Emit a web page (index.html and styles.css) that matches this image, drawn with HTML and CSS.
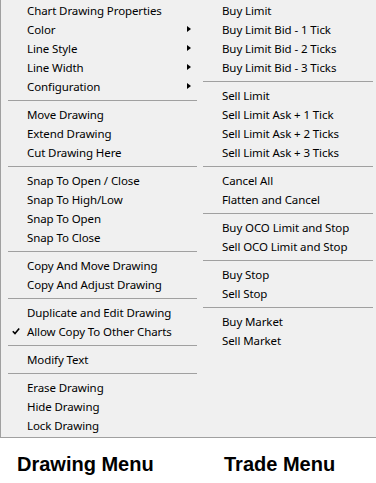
FILE: index.html
```html
<!DOCTYPE html>
<html lang="en">
<head>
    <meta charset="UTF-8">
    <title>Drawing and Trade Menus</title>
    <link rel="stylesheet" href="styles.css">
</head>
<body>

<div class="menus">
    <!-- Drawing Menu -->
    <ul class="menu menu-drawing">
        <li class="item">Chart Drawing Properties</li>
        <li class="item sub">Color</li>
        <li class="item sub">Line Style</li>
        <li class="item sub">Line Width</li>
        <li class="item sub">Configuration</li>
        <li class="sep"></li>
        <li class="item">Move Drawing</li>
        <li class="item">Extend Drawing</li>
        <li class="item">Cut Drawing Here</li>
        <li class="sep"></li>
        <li class="item">Snap To Open / Close</li>
        <li class="item">Snap To High/Low</li>
        <li class="item">Snap To Open</li>
        <li class="item">Snap To Close</li>
        <li class="sep"></li>
        <li class="item">Copy And Move Drawing</li>
        <li class="item">Copy And Adjust Drawing</li>
        <li class="sep"></li>
        <li class="item">Duplicate and Edit Drawing</li>
        <li class="item checked">
            <svg class="check" width="8" height="7" viewBox="0 0 8 7"><path d="M0.8 3.2 L3 5.6 L7.2 0.6" fill="none" stroke="#000" stroke-width="1.6"/></svg>
            Allow Copy To Other Charts
        </li>
        <li class="sep"></li>
        <li class="item">Modify Text</li>
        <li class="sep"></li>
        <li class="item">Erase Drawing</li>
        <li class="item">Hide Drawing</li>
        <li class="item">Lock Drawing</li>
    </ul>

    <!-- Trade Menu -->
    <ul class="menu menu-trade">
        <li class="item">Buy Limit</li>
        <li class="item">Buy Limit Bid - 1 Tick</li>
        <li class="item">Buy Limit Bid - 2 Ticks</li>
        <li class="item">Buy Limit Bid - 3 Ticks</li>
        <li class="sep"></li>
        <li class="item">Sell Limit</li>
        <li class="item">Sell Limit Ask + 1 Tick</li>
        <li class="item">Sell Limit Ask + 2 Ticks</li>
        <li class="item">Sell Limit Ask + 3 Ticks</li>
        <li class="sep"></li>
        <li class="item">Cancel All</li>
        <li class="item">Flatten and Cancel</li>
        <li class="sep"></li>
        <li class="item">Buy OCO Limit and Stop</li>
        <li class="item">Sell OCO Limit and Stop</li>
        <li class="sep"></li>
        <li class="item">Buy Stop</li>
        <li class="item">Sell Stop</li>
        <li class="sep"></li>
        <li class="item">Buy Market</li>
        <li class="item">Sell Market</li>
    </ul>
</div>

<div class="captions">
    <div class="caption caption-drawing">Drawing Menu</div>
    <div class="caption caption-trade">Trade Menu</div>
</div>

</body>
</html>
```

FILE: styles.css
```css
/* Global Styles */
body {
    margin: 0;
    padding: 0;
    background-color: #ffffff;
    color: #000;
    font-family: 'Noto Sans', sans-serif;
}

.menus {
    display: flex;
    width: 376px;
    height: 437px;
    background-color: #f0f0f0;
    border-bottom: 1px solid #a0a0a0;
}

.menu {
    list-style: none;
    margin: 0;
    padding: 1px 0 0 0;
}

.menu-drawing {
    width: 199px;
    border-left: 1px solid #a0a0a0;
}

.menu-trade {
    flex: 1;
}

.item {
    position: relative;
    height: 19px;
    line-height: 19px;
    font-size: 11.5px;
    letter-spacing: -0.1px;
    white-space: nowrap;
}

.menu-drawing .item {
    padding-left: 26px;
}

.menu-trade .item {
    padding-left: 22px;
}

/* submenu arrow */
.sub::after {
    content: "";
    position: absolute;
    left: 186px;
    top: 6px;
    border-top: 3.5px solid transparent;
    border-bottom: 3.5px solid transparent;
    border-left: 4px solid #000;
}

.check {
    position: absolute;
    left: 11px;
    top: 6px;
}

.sep {
    height: 9px;
    display: flex;
    align-items: center;
}

.sep::before {
    content: "";
    display: block;
    width: 100%;
    height: 1px;
    background-color: #a0a0a0;
}

.menu-drawing .sep {
    margin: 0 3px 0 7px;
}

.menu-trade .sep {
    margin: 0 3px 0 3px;
}

.captions {
    display: flex;
    padding-top: 15px;
}

.caption {
    font-family: 'Liberation Sans', Arial, sans-serif;
    font-weight: bold;
    font-size: 20px;
    line-height: 23px;
}

.caption-drawing {
    width: 200px;
    padding-left: 17px;
    box-sizing: border-box;
}

.caption-trade {
    padding-left: 24px;
}
```
